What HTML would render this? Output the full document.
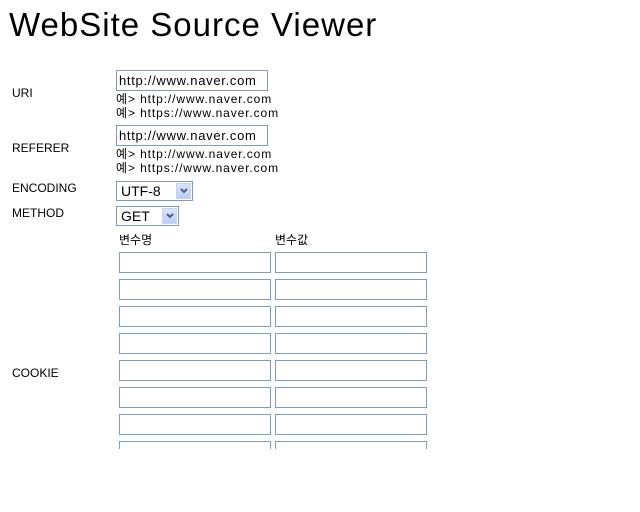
<!DOCTYPE html>
<html><head><meta charset="utf-8"><style>
body{margin:0;background:#fff;width:640px;height:512px;overflow:hidden;position:relative;font-family:"Liberation Sans","Noto Sans CJK KR","NanumGothic",sans-serif;color:#000}
.a{position:absolute;white-space:nowrap}
h1{position:absolute;left:9px;top:6px;margin:0;font-weight:normal;font-size:33px;letter-spacing:1px}
.lbl{font-size:12px}
.inp{position:absolute;box-sizing:border-box;border:1px solid #7f9db9;background:#fff;font-size:13px;padding:1px 0 0 2px;line-height:17px;letter-spacing:0.7px;white-space:nowrap}
.hint{font-size:12px;line-height:14px;letter-spacing:0.9px}
.sel{position:absolute;box-sizing:border-box;border:1px solid #7f9db9;font-size:14px;line-height:18px;padding-left:4px}
.btn{position:absolute;right:1px;top:1px;width:15px;height:16px;background:linear-gradient(#dbe6fb,#b7cbf5);border:1px solid #c3d3fd;box-sizing:border-box}
.btn svg{position:absolute;left:3px;top:4px}
.c{position:absolute;box-sizing:border-box;border:1px solid #7f9db9;width:152px;height:21px;background:#fff}
</style></head><body>
<h1>WebSite Source Viewer</h1>
<div class="a lbl" style="left:12px;top:86px">URI</div>
<div class="inp" style="left:116px;top:70px;width:152px;height:21px">http://www.naver.com</div>
<div class="a hint" style="left:116px;top:92px">예&gt; http://www.naver.com<br>예&gt; https://www.naver.com</div>
<div class="a lbl" style="left:12px;top:141px">REFERER</div>
<div class="inp" style="left:116px;top:125px;width:152px;height:21px">http://www.naver.com</div>
<div class="a hint" style="left:116px;top:147px">예&gt; http://www.naver.com<br>예&gt; https://www.naver.com</div>
<div class="a lbl" style="left:12px;top:181px">ENCODING</div>
<div class="sel" style="left:116px;top:181px;width:77px;height:20px">UTF-8<div class="btn"><svg width="8" height="6"><path d="M1 1 L4 4 L7 1" stroke="#4d6185" stroke-width="2" fill="none"/></svg></div></div>
<div class="a lbl" style="left:12px;top:206px">METHOD</div>
<div class="sel" style="left:116px;top:206px;width:63px;height:20px">GET<div class="btn"><svg width="8" height="6"><path d="M1 1 L4 4 L7 1" stroke="#4d6185" stroke-width="2" fill="none"/></svg></div></div>
<div class="a lbl" style="left:119px;top:231px">변수명</div>
<div class="a lbl" style="left:275px;top:231px">변수값</div>
<div class="a lbl" style="left:12px;top:366px">COOKIE</div>
<div style="position:absolute;left:0;top:0;width:640px;height:449px;overflow:hidden">
<div class="c" style="left:119px;top:252px"></div><div class="c" style="left:275px;top:252px"></div>
<div class="c" style="left:119px;top:279px"></div><div class="c" style="left:275px;top:279px"></div>
<div class="c" style="left:119px;top:306px"></div><div class="c" style="left:275px;top:306px"></div>
<div class="c" style="left:119px;top:333px"></div><div class="c" style="left:275px;top:333px"></div>
<div class="c" style="left:119px;top:360px"></div><div class="c" style="left:275px;top:360px"></div>
<div class="c" style="left:119px;top:387px"></div><div class="c" style="left:275px;top:387px"></div>
<div class="c" style="left:119px;top:414px"></div><div class="c" style="left:275px;top:414px"></div>
<div class="c" style="left:119px;top:441px"></div><div class="c" style="left:275px;top:441px"></div>
</div>
</body></html>
